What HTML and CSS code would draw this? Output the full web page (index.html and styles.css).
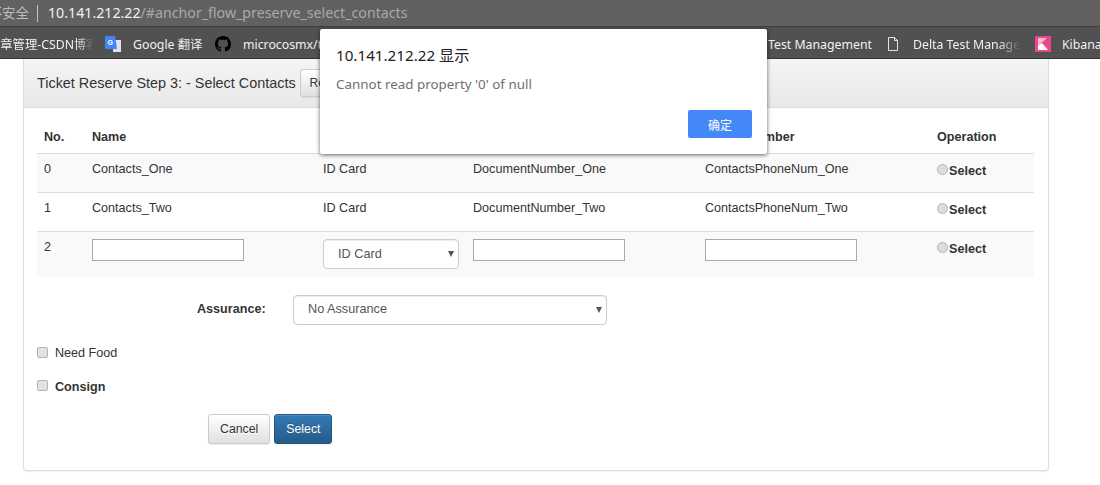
FILE: index.html
```html
<!DOCTYPE html>
<html lang="en">
<head>
    <meta charset="UTF-8">
    <meta name="viewport" content="width=device-width, initial-scale=1.0">
    <title>Ticket Reserve</title>
    <link rel="stylesheet" href="styles.css">
</head>
<body>
    <div class="address-bar">
        <span class="secure">不安全</span>
        <span class="url"><b>10.141.212.22</b>/#anchor_flow_preserve_select_contacts</span>
    </div>

    <div class="bookmarks">
        <span class="mark mark-csdn">文章管理-CSDN博客</span>
        <span class="mark mark-google">
            <svg width="16" height="16" viewBox="0 0 16 16">
                <rect x="8" y="4" width="8" height="12" fill="#e3e3e3"/>
                <path fill="#4285f4" d="M1 0h9l2 13H1a1 1 0 0 1-1-1V1a1 1 0 0 1 1-1z"/>
                <text x="2.6" y="9" class="g-letter">G</text>
            </svg>
            Google 翻译
        </span>
        <span class="mark mark-github">
            <svg width="16" height="16" viewBox="0 0 16 16">
                <path fill="#000" d="M8 0C3.58 0 0 3.58 0 8c0 3.54 2.29 6.53 5.47 7.59.4.07.55-.17.55-.38 0-.19-.01-.82-.01-1.49-2.01.37-2.53-.49-2.69-.94-.09-.23-.48-.94-.82-1.13-.28-.15-.68-.52-.01-.53.63-.01 1.08.58 1.23.82.72 1.21 1.87.87 2.33.66.07-.52.28-.87.51-1.07-1.78-.2-3.64-.89-3.64-3.95 0-.87.31-1.59.82-2.15-.08-.2-.36-1.02.08-2.12 0 0 .67-.21 2.2.82.64-.18 1.32-.27 2-.27s1.36.09 2 .27c1.53-1.04 2.2-.82 2.2-.82.44 1.1.16 1.92.08 2.12.51.56.82 1.27.82 2.15 0 3.07-1.87 3.75-3.65 3.95.29.25.54.73.54 1.48 0 1.07-.01 1.93-.01 2.2 0 .21.15.46.55.38A8.01 8.01 0 0 0 16 8c0-4.42-3.58-8-8-8z"/>
            </svg>
            microcosmx/ts-ticket-system
        </span>
        <span class="mark mark-test">Test Management</span>
        <span class="mark mark-delta">
            <svg width="10" height="14" viewBox="0 0 10 14">
                <path fill="none" stroke="#e4e4e4" d="M.5.5h6l3 3v10H.5zM6.5.5v3h3"/>
            </svg>
            <span class="fade">Delta Test Management</span>
        </span>
        <span class="mark mark-kibana">
            <svg width="16" height="16" viewBox="0 0 16 16">
                <rect width="16" height="16" fill="#e8488b"/>
                <path fill="#f7b9d3" d="M3 2h9L3 10z"/>
                <path fill="#fff" d="M3 14V10l4-3 6 7z"/>
            </svg>
            Kibana
        </span>
    </div>

    <div class="panel">
        <div class="panel-heading">
            <span>Ticket Reserve Step 3: - Select Contacts</span>
            <button class="btn btn-default btn-refresh">Refresh Contacts</button>
        </div>
        <div class="panel-body">
            <table class="contacts">
                <colgroup>
                    <col class="col-no">
                    <col class="col-name">
                    <col class="col-type">
                    <col class="col-doc">
                    <col class="col-phone">
                    <col class="col-op">
                </colgroup>
                <thead>
                    <tr>
                        <th>No.</th>
                        <th>Name</th>
                        <th>Document Type</th>
                        <th>Document Number</th>
                        <th>Phone Number</th>
                        <th>Operation</th>
                    </tr>
                </thead>
                <tbody>
                    <tr>
                        <td>0</td>
                        <td>Contacts_One</td>
                        <td>ID Card</td>
                        <td>DocumentNumber_One</td>
                        <td>ContactsPhoneNum_One</td>
                        <td><label class="pick"><input type="radio" name="contact">Select</label></td>
                    </tr>
                    <tr>
                        <td>1</td>
                        <td>Contacts_Two</td>
                        <td>ID Card</td>
                        <td>DocumentNumber_Two</td>
                        <td>ContactsPhoneNum_Two</td>
                        <td><label class="pick"><input type="radio" name="contact">Select</label></td>
                    </tr>
                    <tr class="new-row">
                        <td>2</td>
                        <td><input class="plain-input" type="text"></td>
                        <td>
                            <div class="select-wrap select-type">
                                <select class="control">
                                    <option>ID Card</option>
                                </select>
                            </div>
                        </td>
                        <td><input class="plain-input" type="text"></td>
                        <td><input class="plain-input" type="text"></td>
                        <td><label class="pick"><input type="radio" name="contact">Select</label></td>
                    </tr>
                </tbody>
            </table>

            <div class="assurance">
                <label class="assurance-label">Assurance:</label>
                <div class="select-wrap select-assurance">
                    <select class="control">
                        <option>No Assurance</option>
                    </select>
                </div>
            </div>

            <label class="check check-food"><input type="checkbox">Need Food</label>
            <label class="check check-consign"><input type="checkbox">Consign</label>

            <div class="actions">
                <button class="btn btn-default">Cancel</button>
                <button class="btn btn-primary">Select</button>
            </div>
        </div>
    </div>

    <div class="alert-box">
        <div class="alert-title">10.141.212.22 显示</div>
        <div class="alert-msg">Cannot read property '0' of null</div>
        <div class="alert-foot">
            <button class="alert-ok">确定</button>
        </div>
    </div>
</body>
</html>
```

FILE: styles.css
```css
* {
    box-sizing: border-box;
}

body {
    margin: 0;
    height: 485px;
    overflow: hidden;
    background-color: #fff;
    font-family: "Liberation Sans", Arial, "Noto Sans CJK SC", sans-serif;
    font-size: 12.6px;
    line-height: 20px;
    color: #333;
}

/* browser chrome */

.address-bar {
    display: flex;
    align-items: center;
    height: 27px;
    background-color: #616161;
    border-bottom: 1px solid #3e3e3e;
    overflow: hidden;
    font-family: "Noto Sans", "Noto Sans CJK SC", sans-serif;
    font-size: 14.2px;
    white-space: nowrap;
}

.secure {
    flex: none;
    width: 38px;
    height: 17px;
    padding-right: 8px;
    direction: rtl;
    overflow: hidden;
    border-right: 1px solid #c4c4c4;
    font-size: 13.5px;
    line-height: 17px;
    color: #bdbdbd;
}

.url {
    margin-left: 10px;
    color: #a9a9a9;
}

.url b {
    font-weight: 400;
    color: #f2f2f2;
}

.bookmarks {
    display: flex;
    align-items: center;
    height: 32px;
    padding-top: 5px;
    background-color: #515151;
    border-bottom: 1px solid #333;
    overflow: hidden;
    font-family: "Noto Sans", "Noto Sans CJK SC", sans-serif;
    font-size: 12.3px;
    color: #f0f0f0;
    white-space: nowrap;
}

.mark {
    flex: none;
    display: flex;
    align-items: center;
    overflow: hidden;
}

.mark svg {
    margin-bottom: 2px;
}

.mark-csdn {
    width: 105px;
    margin-left: -12px;
    margin-right: 12px;
    -webkit-mask-image: linear-gradient(to right, #000 85%, transparent 100%);
    mask-image: linear-gradient(to right, #000 85%, transparent 100%);
}

.mark-google {
    width: 100px;
    gap: 12px;
}

.g-letter {
    font-family: "Liberation Sans", sans-serif;
    font-size: 7px;
    font-weight: bold;
    fill: #fff;
}

.mark-github {
    width: 543px;
    gap: 12px;
    margin-left: 10px;
}

.mark-test {
    width: 120px;
    margin-left: 10px;
}

.mark-delta {
    width: 147px;
    gap: 15px;
}

.fade {
    width: 107px;
    overflow: hidden;
    -webkit-mask-image: linear-gradient(to right, #000 80%, transparent 100%);
    mask-image: linear-gradient(to right, #000 80%, transparent 100%);
}

.mark-kibana {
    gap: 11px;
}

/* panel */

.panel {
    width: 1026px;
    height: 412px;
    margin-left: 23px;
    background-color: #fff;
    border: 1px solid #ddd;
    border-top: none;
    border-radius: 0 0 4px 4px;
    box-shadow: 0 1px 1px rgba(0, 0, 0, .05);
}

.panel-heading {
    display: flex;
    align-items: center;
    gap: 4px;
    height: 49px;
    padding: 0 13px;
    background-image: linear-gradient(to bottom, #f5f5f5 0%, #e8e8e8 100%);
    border-bottom: 1px solid #ddd;
    font-size: 14.4px;
}

.panel-body {
    padding: 14px 14px 0 13px;
}

.btn {
    height: 30px;
    border-radius: 3px;
    font-family: inherit;
    font-size: 12px;
    line-height: 18px;
    padding: 0 9px;
    cursor: pointer;
}

.btn-refresh {
    height: 28px;
    white-space: nowrap;
}

.btn-default {
    color: #333;
    border: 1px solid #ccc;
    background-image: linear-gradient(to bottom, #fff 0%, #e0e0e0 100%);
    text-shadow: 0 1px 0 #fff;
    box-shadow: inset 0 1px 0 rgba(255, 255, 255, .15), 0 1px 1px rgba(0, 0, 0, .075);
}

.btn-primary {
    color: #fff;
    border: 1px solid #245580;
    background-image: linear-gradient(to bottom, #337ab7 0%, #265a88 100%);
    text-shadow: 0 -1px 0 rgba(0, 0, 0, .2);
    box-shadow: inset 0 1px 0 rgba(255, 255, 255, .15), 0 1px 1px rgba(0, 0, 0, .075);
}

/* table */

.contacts {
    width: 997px;
    table-layout: fixed;
    border-collapse: collapse;
}

.col-no { width: 48px; }
.col-name { width: 231px; }
.col-type { width: 150px; }
.col-doc { width: 232px; }
.col-phone { width: 232px; }
.col-op { width: 104px; }

.contacts th,
.contacts td {
    padding: 7px;
    vertical-align: top;
    text-align: left;
    line-height: 17px;
}

.contacts th {
    height: 31px;
    vertical-align: bottom;
    border-bottom: 1px solid #ddd;
}

.contacts td {
    height: 39px;
    border-top: 1px solid #ddd;
}

.contacts tbody tr:nth-child(odd) {
    background-color: #f9f9f9;
}

.contacts .new-row td {
    height: 45px;
}

.pick {
    display: inline-flex;
    align-items: center;
    margin-top: 2px;
    font-weight: bold;
}

.pick input {
    width: 11px;
    height: 11px;
    margin: 0 1px 4px 0;
    appearance: none;
    border: 1px solid #b4b4b4;
    border-radius: 50%;
    background-color: #dcdcdc;
}

.plain-input {
    display: block;
    width: 152px;
    height: 22px;
    border: 1px solid #a9a9a9;
    background-color: #fff;
}

.select-wrap {
    position: relative;
}

/* small arrow over the select */
.select-wrap::after {
    content: "";
    position: absolute;
    right: 5px;
    top: 12px;
    border-left: 3px solid transparent;
    border-right: 3px solid transparent;
    border-top: 6px solid #555;
}

.control {
    display: block;
    width: 100%;
    height: 30px;
    padding: 0 14px 1px;
    appearance: none;
    background-color: #fff;
    border: 1px solid #ccc;
    border-radius: 4px;
    box-shadow: inset 0 1px 1px rgba(0, 0, 0, .075);
    font-family: inherit;
    font-size: 12.7px;
    color: #555;
}

.select-type {
    width: 136px;
}

/* below the table */

.assurance {
    display: flex;
    align-items: center;
    margin-top: 18px;
    padding-left: 160px;
}

.assurance-label {
    width: 96px;
    margin-bottom: 2px;
    font-weight: bold;
}

.select-assurance {
    width: 314px;
}

.check {
    display: flex;
    align-items: center;
    gap: 7px;
}

.check input {
    width: 11px;
    height: 11px;
    margin: 0;
    appearance: none;
    border: 1px solid #b4b4b4;
    border-radius: 2px;
    background-color: #e2e2e2;
}

.check-food {
    margin-top: 18px;
}

.check-consign {
    margin-top: 14px;
    font-weight: bold;
}

.check-consign input {
    margin-bottom: 2px;
}

.actions {
    display: flex;
    gap: 4px;
    margin-top: 17px;
    padding-left: 171px;
}

.actions .btn {
    font-size: 12.3px;
    padding: 0 11px;
}

/* alert */

.alert-box {
    position: absolute;
    left: 320px;
    top: 29px;
    width: 447px;
    height: 125px;
    padding: 15px;
    background-color: #fff;
    border-radius: 2px;
    box-shadow: 0 1px 4px rgba(0, 0, 0, .6);
}

.alert-title {
    padding-left: 1px;
    font-family: "Noto Sans", "Noto Sans CJK SC", sans-serif;
    font-size: 15.2px;
    line-height: 22px;
    color: #222;
}

.alert-msg {
    margin-top: 9px;
    padding-left: 1px;
    font-family: "Noto Sans", sans-serif;
    font-size: 13.4px;
    line-height: 19px;
    color: #6f6f6f;
}

.alert-foot {
    display: flex;
    justify-content: flex-end;
    margin-top: 16px;
}

.alert-ok {
    width: 64px;
    height: 28px;
    border: none;
    border-radius: 2px;
    background-color: #4487f6;
    color: #fff;
    font-family: "Noto Sans CJK SC", sans-serif;
    font-size: 12px;
}
```
